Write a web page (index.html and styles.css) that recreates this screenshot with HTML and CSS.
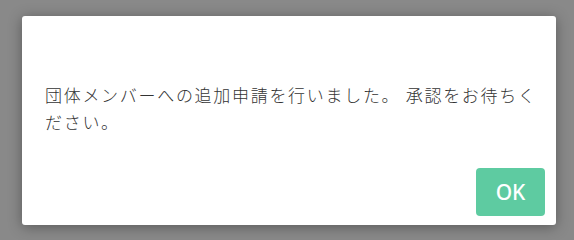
FILE: index.html
```html
<!DOCTYPE html>
<html lang="ja">
<head>
<meta charset="utf-8">
<link rel="stylesheet" href="styles.css">
</head>
<body>
<div class="dialog">
  <p class="message">団体メンバーへの追加申請を行いました。 承認をお待ちください。</p>
  <div class="actions">
    <button class="ok">OK</button>
  </div>
</div>
</body>
</html>
```
FILE: styles.css
```css
html, body {
  margin: 0;
  padding: 0;
}
body {
  background: #898989;
  width: 574px;
  height: 240px;
  overflow: hidden;
  padding-top: 16px;
  padding-left: 22px;
  box-sizing: border-box;
}
.dialog {
  width: 534px;
  height: 209px;
  box-sizing: border-box;
  background: #ffffff;
  border-radius: 3px;
  box-shadow: 0 2px 14px rgba(0, 0, 0, 0.35);
  display: flex;
  flex-direction: column;
  padding: 65px 11px 9px 23px;
}
.message {
  margin: 0;
  padding-right: 1px;
  font-family: "Noto Sans CJK JP", "Noto Sans", sans-serif;
  font-size: 17px;
  font-weight: 300;
  line-height: 27px;
  letter-spacing: 1.7px;
  color: #333333;
}
.actions {
  margin-top: auto;
  display: flex;
  justify-content: flex-end;
}
.ok {
  width: 69px;
  height: 48px;
  border: none;
  border-radius: 4px;
  background: #5ecba1;
  color: #ffffff;
  font-family: "Noto Sans", "Roboto", sans-serif;
  font-size: 21px;
  font-weight: 500;
  padding: 0;
}
```
